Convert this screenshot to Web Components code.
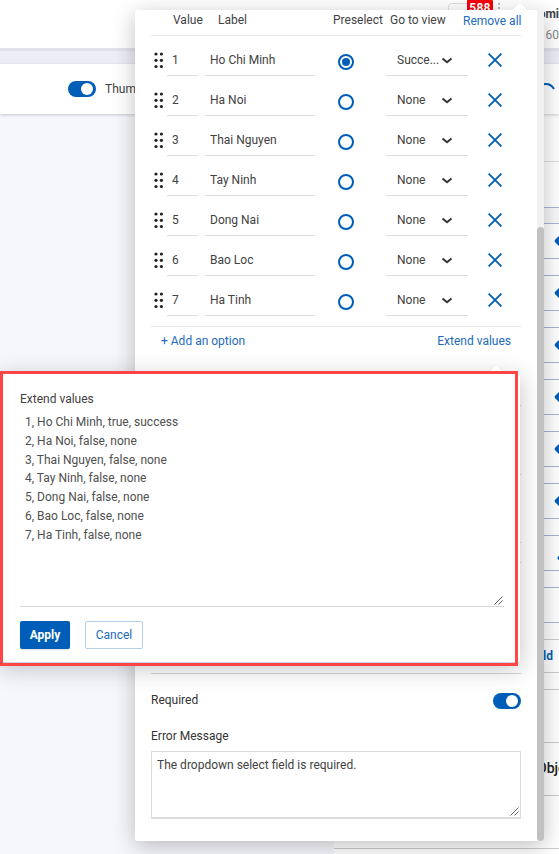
<!DOCTYPE html>
<html lang="en"><head><meta charset="utf-8"><title>Dropdown field settings</title>
<style>
html,body{margin:0;height:854px;overflow:hidden}
body{font:12px/16px Roboto,sans-serif;color:#424242;background:#f6f6fd}
</style></head><body><form-builder></form-builder>
<script>
const define=(name,html)=>customElements.define(name,class extends HTMLElement{
  connectedCallback(){
    if(this.shadowRoot)return;
    const root=this.attachShadow({mode:"open"});
    root.innerHTML="<style>*{box-sizing:border-box}:host{box-sizing:border-box}</style>"+(typeof html==="function"?html(this):html);
  }
});

define("toggle-switch",`<style>:host{display:flex;width:28px;height:16px;border-radius:8px;background:#005eb8;justify-content:flex-end;align-items:center;padding-right:3px;flex:none}
i{width:12px;height:12px;border-radius:50%;background:#fff}</style><i></i>`);

define("radio-dot",el=>`<style>:host{display:grid;place-items:center;width:16px;height:16px;border:2px solid #005eb8;border-radius:50%;background:#fff}
i{width:8px;height:8px;border-radius:50%;background:#005eb8}</style>${el.hasAttribute("checked")?"<i></i>":""}`);

define("resize-grip",`<style>:host{display:block;width:9px;height:9px;white-space:normal}svg{display:block}</style>
<svg width="9" height="9" viewBox="0 0 9 9" stroke="#555" stroke-width=".9"><path d="M.5 8.5l8-8M4.5 8.5l4-4"/></svg>`);

define("option-row",el=>`<style>:host{display:grid;grid-template-columns:16px 31px 7px 110px 71px 82px 1fr;height:40px;align-items:start}
.h{padding:12px 0 0 3px}svg{display:block}
.f{height:36px;border-bottom:1px solid #dcdcdc;padding:12px 0 0 5px;white-space:nowrap}
.g{display:flex;padding-left:11px}.g span{width:44px}
radio-dot{margin:14px 0 0 23px}.x{padding:13px 0 0 20px}</style>
<div class="h"><svg width="10" height="17" viewBox="0 0 10 17" fill="#222"><circle cx="2" cy="2" r="1.6"/><circle cx="7.4" cy="2" r="1.6"/><circle cx="2" cy="8.3" r="1.6"/><circle cx="7.4" cy="8.3" r="1.6"/><circle cx="2" cy="14.5" r="1.6"/><circle cx="7.4" cy="14.5" r="1.6"/></svg></div>
<div class="f">${el.getAttribute("value")}</div><b></b><div class="f"><slot></slot></div>
<radio-dot ${el.hasAttribute("checked")?"checked":""}></radio-dot>
<div class="f g"><span>${el.getAttribute("view")}</span><svg width="12" height="16" viewBox="0 0 12 16" fill="none" stroke="#333" stroke-width="2"><path d="M1.5 6.5L6 10.3l4.5-3.8"/></svg></div>
<div class="x"><svg width="14" height="14" viewBox="0 0 14 14" stroke="#005eb8" stroke-width="1.8"><path d="M.6.6l12.8 12.8M13.4.6L.6 13.4"/></svg></div>`);

define("field-panel",()=>`<style>:host{display:flex;width:409px;height:831px;background:#fff;border-radius:2px;box-shadow:0 5px 22px rgba(0,0,0,.25)}
main{width:402px;padding:0 16px;flex:none}
.track{width:7px;background:#f1f1f1;padding-top:217px}.thumb{height:614px;border-radius:4px;background:#c1c1c1}
header{display:grid;grid-template-columns:45px 115px 57px 73px 1fr;padding-left:22px;height:26px;border-bottom:1px solid #e8e8e8;margin-bottom:4px;padding-top:2px;white-space:nowrap}
header a{padding-top:1px;text-align:right}a{color:#1d6bbb}
.links{display:flex;justify-content:space-between;border-top:1px solid #e8e8e8;padding:6px 10px 0;margin-top:6px;height:32px}
.hidden-fields{height:316px;display:grid;grid-template-rows:48px 69px 68px 20px 1fr}
.hidden-fields i{border-bottom:1px solid #d5d5d5}
.req{display:flex;justify-content:space-between;align-items:center;height:54px;color:#333}
.req span{padding-bottom:2px}
.lab{color:#333;height:23px}
.area{height:68px;border:1px solid #dcdcdc;border-bottom-width:2px;padding:5px;position:relative}
.area resize-grip{position:absolute;right:1px;bottom:1px}</style>
<main><header><span>Value</span><span>Label</span><span>Preselect</span><span>Go to view</span><a>Remove all</a></header>
<option-row value="1" view="Succe..." checked>Ho Chi Minh</option-row><option-row value="2" view="None">Ha Noi</option-row><option-row value="3" view="None">Thai Nguyen</option-row><option-row value="4" view="None">Tay Ninh</option-row><option-row value="5" view="None">Dong Nai</option-row><option-row value="6" view="None">Bao Loc</option-row><option-row value="7" view="None">Ha Tinh</option-row>
<div class="links"><a>+ Add an option</a><a>Extend values</a></div>
<div class="hidden-fields"><i></i><i></i><i></i><i></i><i></i></div>
<div class="req"><span>Required</span><toggle-switch></toggle-switch></div>
<div class="lab">Error Message</div>
<div class="area">The dropdown select field is required.<resize-grip></resize-grip></div></main>
<div class="track"><div class="thumb"></div></div>`);

define("extend-dialog",`<style>:host{display:block;width:520px;height:291px;background:#fff;border-radius:2px;box-shadow:0 5px 24px rgba(0,0,0,.24);padding:19px 0 0 20px;border-bottom:1px solid #ccd3df}
.t{color:#424242;height:21px}
.area{width:484px;height:195px;border-bottom:1px solid #d8d8d8;color:#4f4f4f;line-height:18.8px;white-space:pre;padding:1px 0 0 5px;position:relative}
resize-grip{position:absolute;right:1px;bottom:1px}
.b{display:flex;gap:15px;padding-top:14px}
button{font:12px Roboto,sans-serif;height:28px;padding:0;border-radius:2px;border:1px solid #b3cfea;background:#fff;color:#1d6bbb;width:58px}
.p{width:50px;background:#005eb8;color:#fff;border:0;font-weight:700;box-shadow:0 1px 2px #0002}</style>
<div class="t">Extend values</div>
<div class="area">1, Ho Chi Minh, true, success
2, Ha Noi, false, none
3, Thai Nguyen, false, none
4, Tay Ninh, false, none
5, Dong Nai, false, none
6, Bao Loc, false, none
7, Ha Tinh, false, none<resize-grip></resize-grip></div>
<div class="b"><button class="p">Apply</button><button>Cancel</button></div>`);

define("page-backdrop",()=>`<style>:host{display:flex;flex-direction:column;height:854px;isolation:isolate}
.top{height:51px;background:#fff;border-bottom:3px solid #e0e1ec;display:flex;justify-content:flex-end;flex:none}
.notice{width:44px;height:40px;border:1px solid #ddd;border-radius:4px;margin:3px 38px 0 0;position:relative}
.notice b{position:absolute;left:18px;top:-6px;width:26px;height:20px;border-radius:4px;background:#f8000a;color:#fff;font-size:12px;line-height:21px;text-align:center;letter-spacing:.2px}
.dots{position:absolute;left:49px;top:-1px;width:2px;height:14px;background:repeating-linear-gradient(#bbb 0 2px,transparent 2px 4px)}
.user{width:29px;overflow:hidden;display:flex;flex-direction:column;align-items:flex-end;white-space:nowrap}
.user b{color:#424242;padding-top:6px;height:26px}.user span{color:#888;padding-top:1px}
.band{height:13px;background:#ededf8;flex:none}
.tools{height:50px;background:#fff;display:flex;align-items:center;padding-left:68px;gap:9px;box-shadow:0 1px 3px #0003;flex:none;z-index:1}
.tools svg{margin-left:auto}
.side{width:225px;margin-left:auto;background:#fff;flex:1}
.s1{height:48px;border-bottom:1px solid #ddd}.s2{height:46px;border-bottom:1px solid #a9b6cf;box-shadow:0 2px 3px #0002}
.gap{height:15px;background:#f8f8fb}
.r{height:36px;border:solid #a9b5d0;border-width:1px 0;margin-bottom:16px;display:flex;justify-content:flex-end;align-items:center;overflow:hidden}
.r i{width:10px;height:10px;background:#005eb8;transform:rotate(45deg);margin-right:-7px;border-radius:2px;flex:none}
.r .low{width:6px;height:6px;margin:10px -5px 0 0}
.q{height:34px;border:solid #ccc;border-width:1px 0;color:#005eb8;font-weight:700;text-align:right;padding:8px 6px 0 0}
.c{margin-top:16px;display:grid;grid-template-rows:54px 53px 53px;border-top:1px solid #ccc;margin-bottom:0}
.c div{border-bottom:1px solid #ccc;font-size:14px;font-weight:500;color:#222;padding:17px 0 0 203px;white-space:nowrap;overflow:hidden}
.c{grid-template-rows:53px 53px 53px}</style>
<div class="top"><div class="notice"><b>588</b><i class="dots"></i></div><div class="user"><b>omi</b><span>160</span></div></div>
<div class="band"></div>
<div class="tools"><toggle-switch></toggle-switch><span>Thumbnail</span><svg width="24" height="16" viewBox="0 0 24 16" fill="none" stroke="#005eb8" stroke-width="2"><path d="M3 8q1-5 8-5 5 0 8 5"/></svg></div>
<div class="side"><div class="s1"></div><div class="s2"></div><div class="gap"></div>
${Array.from({length:8},(_,i)=>`<div class="r">${i<6?"<i></i>":i===6?'<i class="low"></i>':""}</div>`).join("")}
<div class="q">ld</div><div class="c"><div></div><div>Obje</div><div></div></div></div>`);

define("form-builder",`<style>:host{display:block;position:relative;width:559px;height:854px;overflow:hidden}
field-panel{position:absolute;left:135px;top:10px}
extend-dialog{position:absolute;left:0;top:372px}
.callout{position:absolute;left:0;top:371px;width:518px;height:295px;border:3px solid #ff4545}
.arrow{position:absolute;width:14px;height:7px;background:#fff;clip-path:polygon(0 100%,43% 5%,57% 5%,100% 100%)}
.clip{position:absolute;left:0;top:0;width:537px;height:854px;overflow:hidden}</style>
<page-backdrop></page-backdrop><field-panel></field-panel>
<div class="arrow" style="left:513px;top:3px"></div>
<div class="clip"><extend-dialog></extend-dialog><div class="arrow" style="left:489px;top:366px"></div></div>
<div class="callout"></div>`);
</script></body></html>
